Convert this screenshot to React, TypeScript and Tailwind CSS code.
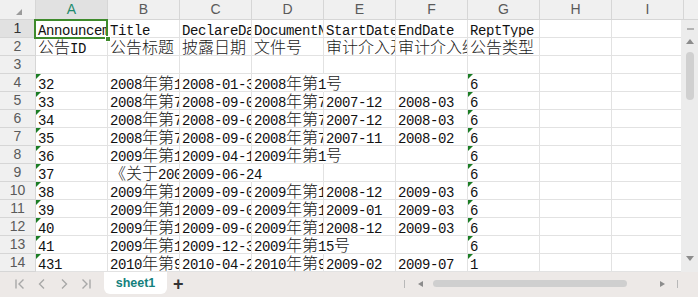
const COLS = ['A', 'B', 'C', 'D', 'E', 'F', 'G', 'H', 'I']

const DATA: string[][] = [
  ['AnnouncementID', 'Title', 'DeclareDate', 'DocumentNo', 'StartDate', 'EndDate', 'ReptType'],
  ['公告ID', '公告标题', '披露日期', '文件号', '审计介入开始日期', '审计介入结束日期', '公告类型'],
  [],
  ['32', '2008年第1号公告', '2008-01-31', '2008年第1号', '', '', '6'],
  ['33', '2008年第7号公告', '2008-09-02', '2008年第7号', '2007-12', '2008-03', '6'],
  ['34', '2008年第7号公告', '2008-09-02', '2008年第7号', '2007-12', '2008-03', '6'],
  ['35', '2008年第7号公告', '2008-09-02', '2008年第7号', '2007-11', '2008-02', '6'],
  ['36', '2009年第1号公告', '2009-04-10', '2009年第1号', '', '', '6'],
  ['37', '《关于2009年度审计》', '2009-06-24', '', '', '', '6'],
  ['38', '2009年第14号公告', '2009-09-01', '2009年第14号', '2008-12', '2009-03', '6'],
  ['39', '2009年第14号公告', '2009-09-01', '2009年第14号', '2009-01', '2009-03', '6'],
  ['40', '2009年第14号公告', '2009-09-01', '2009年第14号', '2008-12', '2009-03', '6'],
  ['41', '2009年第15号公告', '2009-12-31', '2009年第15号', '', '', '6'],
  ['431', '2010年第9号公告', '2010-04-22', '2010年第9号', '2009-02', '2009-07', '1'],
]

const CJK = /([\u3000-\u303f\u4e00-\u9fff\uff00-\uffef]+)/

function textWidth(s: string) {
  let w = 0
  for (const ch of s) w += CJK.test(ch) ? 16 : 8
  return w
}

function Runs({ text }: { text: string }) {
  return (
    <>
      {text.split(CJK).map((part, i) =>
        CJK.test(part) ? (
          <span
            key={i}
            className="font-['Noto_Sans_CJK_SC',sans-serif] font-light text-[16px] leading-[0] tracking-normal text-[#1a1a1a]"
          >
            {part}
          </span>
        ) : (
          <span key={i}>{part}</span>
        ),
      )}
    </>
  )
}

function Cell({ text, next, flag }: { text: string; next: string; flag: boolean }) {
  const spills = text !== '' && next === '' && textWidth(text) + 2 > 71

  return (
    <div
      className={
        spills
          ? 'relative h-[18px] w-[72px] shrink-0 border-r border-b border-r-transparent border-b-[#e2e2e2] pl-[2px] whitespace-nowrap overflow-visible'
          : 'relative h-[18px] w-[72px] shrink-0 border-r border-b border-[#e2e2e2] pl-[2px] whitespace-nowrap overflow-hidden'
      }
    >
      {flag && (
        <div className="absolute left-0 top-0 w-0 h-0 border-t-[5px] border-r-[5px] border-t-[#1b7d24] border-r-transparent" />
      )}
      <Runs text={text} />
    </div>
  )
}

function UpArrow() {
  return <div className="w-0 h-0 border-x-[4px] border-x-transparent border-b-[5px] border-b-[#8c8c8c]" />
}

function DownArrow() {
  return <div className="w-0 h-0 border-x-[4px] border-x-transparent border-t-[5px] border-t-[#8c8c8c]" />
}

function NavIcon({ d }: { d: string }) {
  return (
    <svg width="10" height="12" viewBox="0 0 10 12" fill="none" stroke="#a8a8a8" strokeWidth="1.4">
      <path d={d} />
    </svg>
  )
}

export default function App() {
  return (
    <div className="relative w-[698px] h-[297px] flex flex-col bg-white overflow-hidden font-['Liberation_Mono',monospace] text-[14px] tracking-[-0.4px] leading-[23px] text-[#111]">
      {/* column headers */}
      <div className="flex h-[20px] shrink-0 bg-[#f0f0f0] border-b border-[#d6d6d6] font-['Liberation_Sans',sans-serif] text-[14px] tracking-normal leading-[19px] text-[#5a5a5a]">
        <div className="w-[36px] shrink-0 border-r border-[#d6d6d6] flex items-end justify-center pb-[4px] pl-[3px]">
          <div className="w-0 h-0 border-l-[6px] border-l-transparent border-b-[6px] border-b-[#9b9b9b]" />
        </div>
        {COLS.map((c) => (
          <div
            key={c}
            className={
              c === 'A'
                ? 'w-[72px] shrink-0 border-r border-[#d6d6d6] bg-[#e1e1e1] text-[#1e8a6c] text-center'
                : 'w-[72px] shrink-0 border-r border-[#d6d6d6] text-center'
            }
          >
            {c}
          </div>
        ))}
      </div>

      <div className="flex flex-1 min-h-0">
        <div className="flex-1 overflow-hidden">
          {DATA.map((row, r) => (
            <div key={r} className="flex">
              <div
                className={
                  r === 0
                    ? 'w-[36px] h-[18px] shrink-0 border-r border-b border-[#d6d6d6] bg-[#e1e1e1] text-[#333] text-center font-["Liberation_Sans",sans-serif] text-[14px] tracking-normal leading-[17px]'
                    : 'w-[36px] h-[18px] shrink-0 border-r border-b border-[#d6d6d6] bg-[#f0f0f0] text-[#5a5a5a] text-center font-["Liberation_Sans",sans-serif] text-[14px] tracking-normal leading-[17px]'
                }
              >
                {r + 1}
              </div>
              {COLS.map((_, c) => (
                <Cell
                  key={c}
                  text={row[c] ?? ''}
                  next={row[c + 1] ?? ''}
                  flag={r >= 3 && (c === 0 || c === 6)}
                />
              ))}
            </div>
          ))}
        </div>

        {/* vertical scrollbar */}
        <div className="w-[17px] shrink-0 bg-[#ececec] flex flex-col items-center pl-[1px]">
          <div className="mt-[8px] w-[7px] h-[2px] bg-[#b3b3b3]" />
          <div className="mt-[9px]">
            <UpArrow />
          </div>
          <div className="mt-[8px] w-[8px] h-[48px] rounded-full bg-[#d0d0d0]" />
          <div className="mt-auto mb-[11px]">
            <DownArrow />
          </div>
        </div>
      </div>

      {/* sheet tabs */}
      <div className="h-[25px] shrink-0 bg-[#ede9e7] flex items-start font-['Liberation_Sans',sans-serif] tracking-normal">
        <div className="flex items-center h-[23px] pl-[15px] gap-[12px]">
          <NavIcon d="M1 1.5v9M8.5 1.5L4 6l4.5 4.5" />
          <NavIcon d="M7 1.5L2.5 6 7 10.5" />
          <NavIcon d="M3 1.5L7.5 6 3 10.5" />
          <NavIcon d="M1.5 1.5L6 6l-4.5 4.5M9 1.5v9" />
        </div>
        <div className="ml-[13px] w-[63px] h-[22px] bg-white rounded-b-[6px] flex items-center justify-center text-[12.5px] font-bold text-[#13807c]">
          sheet1
        </div>
        <div className="ml-[6px] h-[23px] flex items-center text-[18px] font-bold text-[#333] leading-none">+</div>
        <div className="flex-1" />
        <div className="flex items-center h-[23px] pr-[20px]">
          <div className="w-px h-[8px] bg-[#b8b8b8]" />
          <div className="ml-[13px] w-0 h-0 border-y-[3px] border-y-transparent border-r-[5px] border-r-[#8c8c8c]" />
          <div className="ml-[10px] w-[194px] h-[7px] rounded-full bg-[#cfcfcf]" />
          <div className="ml-[33px] w-0 h-0 border-y-[3px] border-y-transparent border-l-[5px] border-l-[#8c8c8c]" />
          <div className="ml-[12px] w-px h-[8px] bg-[#b8b8b8]" />
        </div>
      </div>

      {/* active cell A1 */}
      <div className="absolute left-[34px] top-[19px] w-[74px] h-[20px] border-2 border-[#3e8a2c] pointer-events-none" />
      <div className="absolute left-[105px] top-[36px] w-[6px] h-[6px] bg-[#3e8a2c] border border-white pointer-events-none" />
    </div>
  )
}
